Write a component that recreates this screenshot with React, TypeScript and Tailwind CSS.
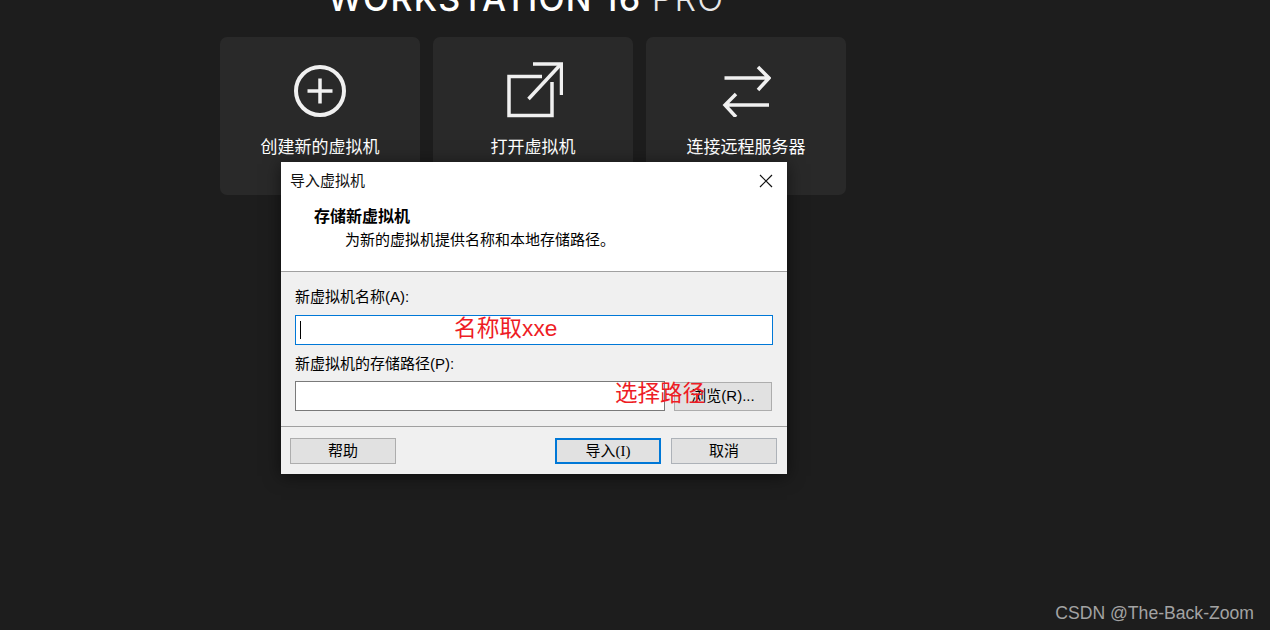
import React from "react";

const cjk = "font-['Liberation_Sans','Noto_Sans_CJK_SC',sans-serif]";

const PlusIcon = () => (
  <svg width="54" height="54" viewBox="0 0 54 54" fill="none" stroke="#f0f0f0" strokeWidth="4">
    <circle cx="27" cy="27" r="24" />
    <path d="M27 14.5v25M14.5 27h25" strokeWidth="3.5" />
  </svg>
);

const OpenIcon = () => (
  <svg width="60" height="58" viewBox="0 0 60 58" fill="none" stroke="#f0f0f0" strokeWidth="3.5">
    <path d="M39 14.5H6v39h43V20" />
    <path d="M30 2h28.5v31" />
    <path d="M58 2 25.5 37" />
  </svg>
);

const SwapIcon = () => (
  <svg width="50" height="52" viewBox="0 0 50 52" fill="none" stroke="#f0f0f0" strokeWidth="3.5">
    <path d="M3.5 13H48M37 2l11 11-11 12" />
    <path d="M48 40H4M15 29 4 40l11 12" />
  </svg>
);

const cards = [
  { label: "创建新的虚拟机", icon: <PlusIcon /> },
  { label: "打开虚拟机", icon: <OpenIcon /> },
  { label: "连接远程服务器", icon: <SwapIcon /> },
];

const DlgButton = ({ label, className }: { label: React.ReactNode; className: string }) => (
  <button className={"h-[26px] w-[106px] bg-[#e1e1e1] text-[15px] text-black flex items-center justify-center " + className}>
    {label}
  </button>
);

export default function App() {
  return (
    <div className={"relative w-[1270px] h-[630px] overflow-hidden bg-[#1d1d1d] " + cjk}>
      <div className="h-[37px] w-[626px] ml-[220px] relative overflow-hidden">
        <div className="absolute left-[108px] -top-[18px] text-[34px] leading-[34px] tracking-[1.3px] text-white font-['Inter',sans-serif] font-medium whitespace-nowrap">
          WORKSTATION 16 <span className="font-light text-[#e8e8e8]">PRO</span>
        </div>
      </div>

      <div className="ml-[220px] flex gap-[13px]">
        {cards.map((c) => (
          <div key={c.label} className="w-[200px] h-[158px] rounded-[7px] bg-[#292929] flex flex-col items-center pt-[25px]">
            <div className="h-[58px] flex items-center justify-center">{c.icon}</div>
            <div className="mt-[16px] text-[17px] leading-[24px] text-white">{c.label}</div>
          </div>
        ))}
      </div>

      {/* dialog */}
      <div className="absolute left-[281px] top-[162px] w-[506px] h-[312px] bg-[#f0f0f0] shadow-[0_2px_16px_rgba(0,0,0,0.55)] flex flex-col text-black">
        <div className="bg-white h-[110px] border-b border-[#a0a0a0]">
          <div className="flex items-center justify-between pl-[9px] pr-[14px] h-[37px]">
            <span className="text-[15px] leading-[20px] text-[#111]">导入虚拟机</span>
            <svg width="14" height="14" viewBox="0 0 14 14" stroke="#111" strokeWidth="1.2" fill="none">
              <path d="M1 1l12 12M13 1 1 13" />
            </svg>
          </div>
          <div className="pl-[33px] text-[16px] leading-[22px] font-bold mt-[7px]">存储新虚拟机</div>
          <div className="pl-[64px] text-[15px] leading-[20px] mt-[2px]">为新的虚拟机提供名称和本地存储路径。</div>
        </div>

        <div className="px-[14px] pt-[15px] h-[155px] border-b border-[#a0a0a0]">
          <div className="text-[15px] leading-[20px]">新虚拟机名称(A):</div>
          <div className="mt-[8px] w-[478px] h-[30px] bg-white border border-[#0078d7] flex items-center pl-[4px]">
            <div className="w-px h-[18px] bg-black" />
          </div>
          <div className="mt-[9px] text-[15px] leading-[20px]">新虚拟机的存储路径(P):</div>
          <div className="mt-[7px] flex items-center">
            <div className="w-[370px] h-[30px] bg-white border border-[#7a7a7a]" />
            <button className="ml-[9px] w-[98px] h-[29px] bg-[#e1e1e1] border border-[#adadad] text-[15px]">浏览(R)...</button>
          </div>
        </div>

        <div className="flex items-center pl-[9px] pt-[11px]">
          <DlgButton label="帮助" className="border border-[#adadad]" />
          <DlgButton
            label={<>导入<span className="font-['Liberation_Serif',serif]">(I)</span></>}
            className="ml-[159px] border-2 border-[#0078d7]"
          />
          <DlgButton label="取消" className="ml-[10px] border border-[#adb2b8] bg-[#e0e2e5]" />
        </div>
      </div>

      {/* red annotations */}
      <div className="absolute left-[454px] top-[313px] text-[22.7px] leading-[30px] text-[#ee1c25]">名称取xxe</div>
      <div className="absolute left-[615px] top-[379px] text-[22.5px] leading-[30px] text-[#ee1c25]">选择路径</div>

      <div className="absolute right-[16px] bottom-[6px] text-[17.6px] leading-[22px] text-[#a3a3a3] font-['Liberation_Sans',sans-serif]">
        CSDN @The-Back-Zoom
      </div>
    </div>
  );
}
